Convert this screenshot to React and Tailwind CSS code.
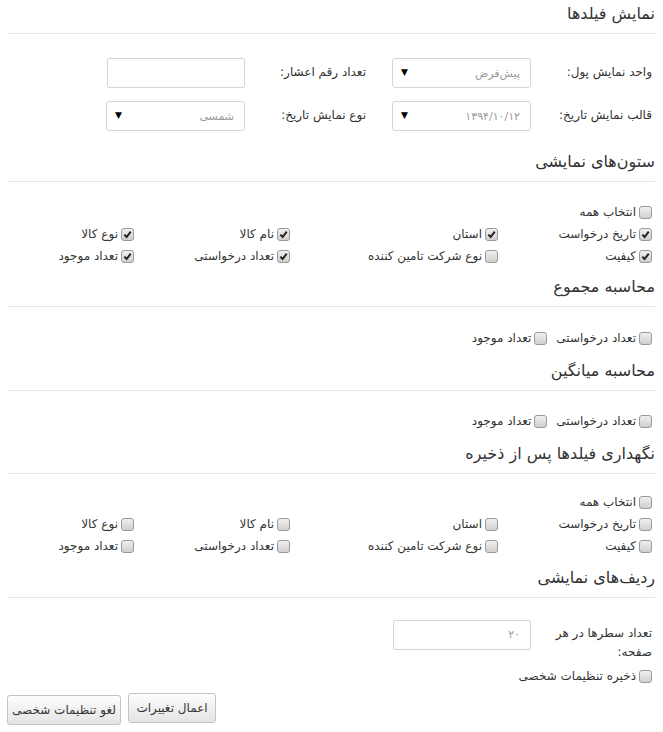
import React from 'react';

function Check({ checked }) {
  return (
    <span className="inline-flex h-[13px] w-[13px] shrink-0 items-center justify-center rounded-[3px] border border-[#9a9a9a] bg-gradient-to-b from-[#f0f0f0] to-[#cfcfcf]">
      {checked && (
        <svg width="9" height="9" viewBox="0 0 10 10">
          <path d="M1.5 5.2 L4 7.8 L8.6 1.8" stroke="#222" strokeWidth="2.2" fill="none" />
        </svg>
      )}
    </span>
  );
}

function Item({ label, checked }) {
  return (
    <label className="flex h-[22px] items-center gap-[3px] whitespace-nowrap">
      <Check checked={checked} />
      <span>{label}</span>
    </label>
  );
}

function Heading({ children, className }) {
  return (
    <div className={'border-b border-[#e5e5e5] pb-[7px] text-[16px] leading-6 text-[#333] ' + className}>
      {children}
    </div>
  );
}

function Select({ value }) {
  return (
    <div className="flex h-[30px] w-[139px] items-center justify-between rounded-[3px] border border-[#d5d5d5] bg-white pl-[8px] pr-[10px] text-[11px] text-[#999]">
      <span className="pt-[3px]">{value}</span>
      <span className="text-[9px] text-black">▼</span>
    </div>
  );
}

function Input({ value, width = 'w-[139px]' }) {
  return (
    <div className={'flex h-[30px] items-center rounded-[2px] border border-[#d5d5d5] bg-white px-[10px] text-[11px] text-[#999] ' + width}>
      {value}
    </div>
  );
}

function ColumnsGrid({ checked }) {
  const rows = [
    ['تاریخ درخواست', 'استان', 'نام کالا', 'نوع کالا'],
    ['کیفیت', 'نوع شرکت تامین کننده', 'تعداد درخواستی', 'تعداد موجود'],
  ];
  return (
    <div className="pr-[3px]">
      <Item label="انتخاب همه" checked={false} />
      {rows.map((row, i) => (
        <div key={i} className="grid grid-cols-[154px_208px_156px_1fr]">
          {row.map((label) => (
            <Item key={label} label={label} checked={checked && label !== 'نوع شرکت تامین کننده'} />
          ))}
        </div>
      ))}
    </div>
  );
}

function PairRow() {
  return (
    <div className="flex gap-[9px] pr-[3px]">
      <Item label="تعداد درخواستی" />
      <Item label="تعداد موجود" />
    </div>
  );
}

export default function App() {
  return (
    <div dir="rtl" className="w-[663px] bg-white px-2 pb-3 text-[12px] text-[#333] font-['DejaVu_Sans','Noto_Sans',sans-serif]">
      {/* Fields */}
      <Heading className="pt-[2px]">نمایش فیلدها</Heading>
      <div className="mt-[24px] flex flex-col gap-[13px]">
        <div className="flex items-start">
          <div className="w-[124px] pt-[5px] pr-[3px]">واحد نمایش پول:</div>
          <Select value="پیش‌فرض" />
          <div className="w-[26px]" />
          <div className="w-[121px] pt-[5px]">تعداد رقم اعشار:</div>
          <Input value="" width="w-[138px]" />
        </div>
        <div className="flex items-start">
          <div className="w-[124px] pt-[5px] pr-[3px]">قالب نمایش تاریخ:</div>
          <Select value="۱۳۹۴/۱۰/۱۲" />
          <div className="w-[26px]" />
          <div className="w-[121px] pt-[5px]">نوع نمایش تاریخ:</div>
          <Select value="شمسی" />
        </div>
      </div>

      {/* Visible columns */}
      <Heading className="mt-[19px]">ستون‌های نمایشی</Heading>
      <div className="mt-[19px]">
        <ColumnsGrid checked />
      </div>

      {/* Sum */}
      <Heading className="mt-[8px]">محاسبه مجموع</Heading>
      <div className="mt-[20px]">
        <PairRow />
      </div>

      {/* Average */}
      <Heading className="mt-[10px]">محاسبه میانگین</Heading>
      <div className="mt-[19px]">
        <PairRow />
      </div>

      {/* Keep fields */}
      <Heading className="mt-[10px]">نگهداری فیلدها پس از ذخیره</Heading>
      <div className="mt-[17px]">
        <ColumnsGrid checked={false} />
      </div>

      {/* Rows */}
      <Heading className="mt-[9px]">ردیف‌های نمایشی</Heading>
      <div className="mt-[22px] flex items-start">
        <div className="w-[124px] pt-[4px] pr-[3px] leading-[19px]">
          تعداد سطرها در هر
          <br />
          صفحه:
        </div>
        <Input value="۲۰" width="w-[138px]" />
      </div>
      <div className="mt-[3px] pr-[3px]">
        <Item label="ذخیره تنظیمات شخصی" />
      </div>
      <div className="-ml-px mt-[6px] flex justify-end gap-[7px]">
        <button className="h-[30px] w-[88px] rounded-[3px] border border-[#c4c4c4] bg-gradient-to-b from-[#fdfdfd] to-[#e4e4e4] text-[12px] text-[#333]">
          اعمال تغییرات
        </button>
        <button className="mt-[2px] h-[30px] w-[114px] rounded-[3px] border border-[#c4c4c4] bg-gradient-to-b from-[#fdfdfd] to-[#e4e4e4] text-[12px] text-[#333]">
          لغو تنظیمات شخصی
        </button>
      </div>
    </div>
  );
}
